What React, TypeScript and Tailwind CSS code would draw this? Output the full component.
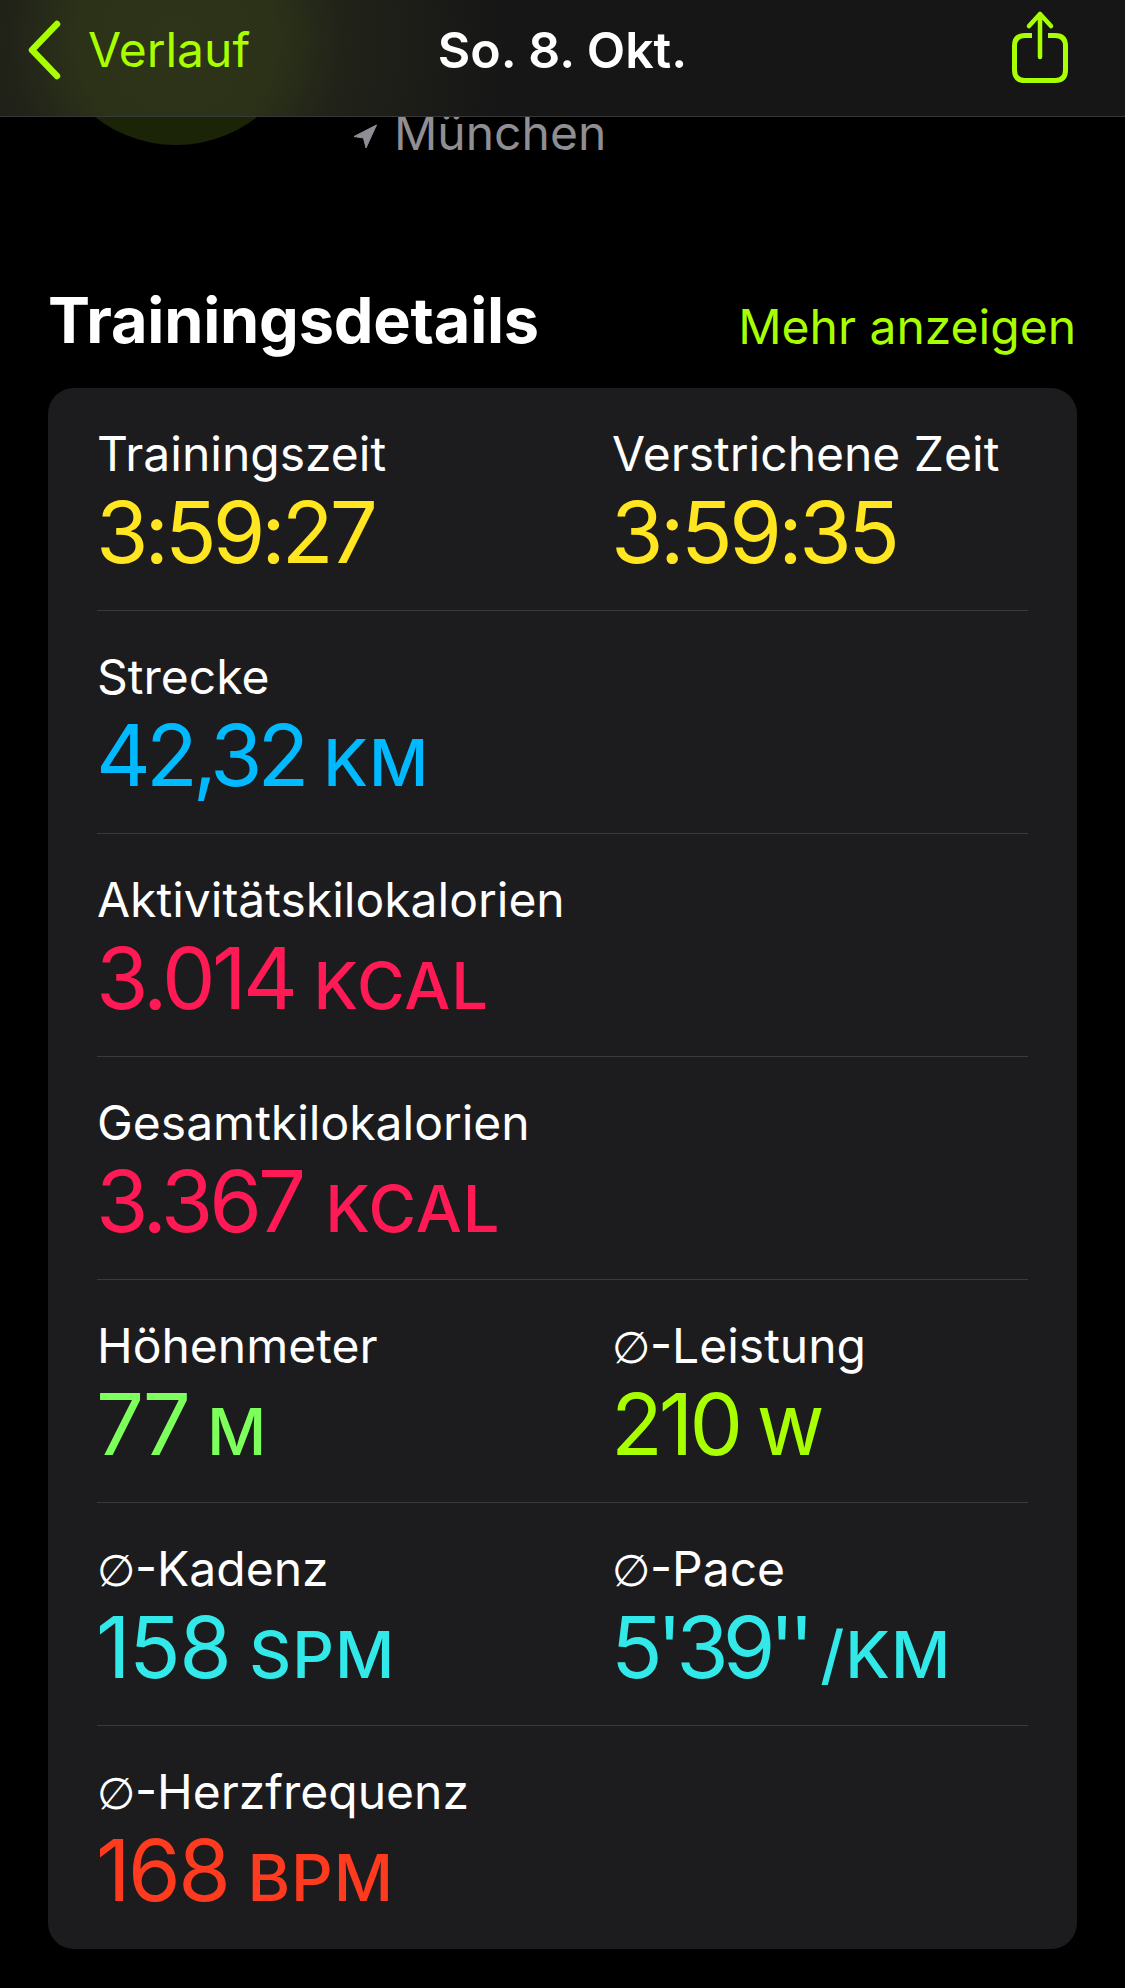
import React from 'react';

type Metric = { label: string; avg?: boolean; value: string; unit?: string; color: string; track: string; gap?: string };

const rows: Metric[][] = [
  [
    { label: 'Trainingszeit', value: '3:59:27', color: 'text-[#ffe620]', track: 'tracking-[-4px]' },
    { label: 'Verstrichene Zeit', value: '3:59:35', color: 'text-[#ffe620]', track: 'tracking-[-3.5px]' },
  ],
  [{ label: 'Strecke', value: '42,32', unit: 'KM', color: 'text-[#00b9ff]', track: 'tracking-[-5px]' }],
  [{ label: 'Aktivitätskilokalorien', value: '3.014', unit: 'KCAL', color: 'text-[#ff1a55]', track: 'tracking-[-3.5px]' }],
  [{ label: 'Gesamtkilokalorien', value: '3.367', unit: 'KCAL', color: 'text-[#ff1a55]', track: 'tracking-[-4px]', gap: 'ml-[23px]' }],
  [
    { label: 'Höhenmeter', value: '77', unit: 'M', color: 'text-[#7dff5c]', track: 'tracking-[-3px]' },
    { label: '-Leistung', avg: true, value: '210', unit: 'W', color: 'text-[#a8ff00]', track: 'tracking-[-4px]' },
  ],
  [
    { label: '-Kadenz', avg: true, value: '158', unit: 'SPM', color: 'text-[#33e8e8]', track: 'tracking-[-1.5px]' },
    { label: '-Pace', avg: true, value: "5'39''", unit: '/KM', color: 'text-[#33e8e8]', track: 'tracking-[-6px]', gap: 'ml-[12px]' },
  ],
  [{ label: '-Herzfrequenz', avg: true, value: '168', unit: 'BPM', color: 'text-[#ff3b1f]', track: 'tracking-[-2.5px]' }],
];

const MetricCell = ({ metric }: { metric: Metric }) => (
  <div className="w-[515px] shrink-0">
    <div className="h-[65px] whitespace-nowrap text-[48px] leading-[56px] text-white">
      {metric.avg && <span className="font-['DejaVu_Sans'] text-[44px] font-extralight">∅</span>}
      {metric.label}
    </div>
    <div className={`-ml-[1px] flex h-[84px] items-baseline leading-[84px] ${metric.color}`}>
      <span className={`text-[85px] ${metric.track}`}>{metric.value}</span>
      {metric.unit && <span className={`${metric.gap ?? 'ml-[19px]'} text-[65px] font-medium tracking-[1px]`}>{metric.unit}</span>}
    </div>
  </div>
);

export default function App() {
  return (
    <div className="relative h-[1988px] w-[1125px] overflow-hidden bg-black font-['Inter','DejaVu_Sans',sans-serif]">
      {/* Nav bar */}
      <div className="absolute top-0 left-0 z-10 flex h-[117px] w-full items-center justify-between border-b border-[#38383a] bg-[radial-gradient(circle_at_176px_40px,#2e3419_0,#2c3218_100px,#212319_165px,#161616_330px)] pb-[16px]">
        <div className="flex items-center">
          <svg width="34" height="60" viewBox="0 0 34 60" className="ml-[27px]" fill="none">
            <path d="M30 4 L5 30 L30 56" stroke="#a8ff00" strokeWidth="6.5" strokeLinecap="round" strokeLinejoin="round" />
          </svg>
          <span className="ml-[27px] text-[48px] leading-[60px] text-[#a8ff00]">Verlauf</span>
        </div>
        <span className="absolute left-0 w-full text-center text-[50px] leading-[60px] font-semibold text-white">So. 8. Okt.</span>
        <svg width="60" height="76" viewBox="0 0 60 76" className="mr-[55px] mt-[-5px]" fill="none" stroke="#a8ff00">
          <path d="M22 25.5 H15 Q4.5 25.5 4.5 36 V60 Q4.5 70.5 15 70.5 H45 Q55.5 70.5 55.5 60 V36 Q55.5 25.5 45 25.5 H38" strokeWidth="5" />
          <path d="M30 47 V4 M19 16 L30 4 L41 16" strokeWidth="4.5" strokeLinecap="round" strokeLinejoin="round" />
        </svg>
      </div>

      {/* Map thumbnail and place */}
      <div className="-mt-[117px] flex h-[262px] pl-[45px]">
        <div className="h-[262px] w-[262px] rounded-full bg-[#1c2408]" />
        <div className="ml-[46px] flex h-[286px] items-end gap-[16px] pb-[8px] text-[#8e8e93]">
          <svg width="25" height="25" viewBox="0 0 25 25" className="mb-[12px]">
            <path d="M23.5 1 L1 12.5 L10.5 14 L13 24 Z" fill="#8e8e93" stroke="#8e8e93" strokeWidth="1" strokeLinejoin="round" />
          </svg>
          <span className="text-[48px] leading-[56px]">München</span>
        </div>
      </div>

      {/* Section title */}
      <div className="mt-[143px] flex h-[64px] items-center justify-between pl-[48px] pr-[49px]">
        <span className="text-[63px] font-bold tracking-[-0.2px] text-white">Trainingsdetails</span>
        <span className="mt-[14px] text-[48px] leading-[60px] text-[#a8ff00]">Mehr anzeigen</span>
      </div>

      {/* Details card */}
      <div className="mx-[48px] mt-[36px] h-[1561px] rounded-[26px] bg-[#1c1c1e] px-[49px]">
        {rows.map((row, i) => (
          <div key={i} className={`flex pt-[38px] ${i > 0 ? 'h-[223px] border-t border-[#3a3a3c]' : 'h-[222px]'}`}>
            {row.map((m) => (
              <MetricCell key={m.label} metric={m} />
            ))}
          </div>
        ))}
      </div>
    </div>
  );
}
